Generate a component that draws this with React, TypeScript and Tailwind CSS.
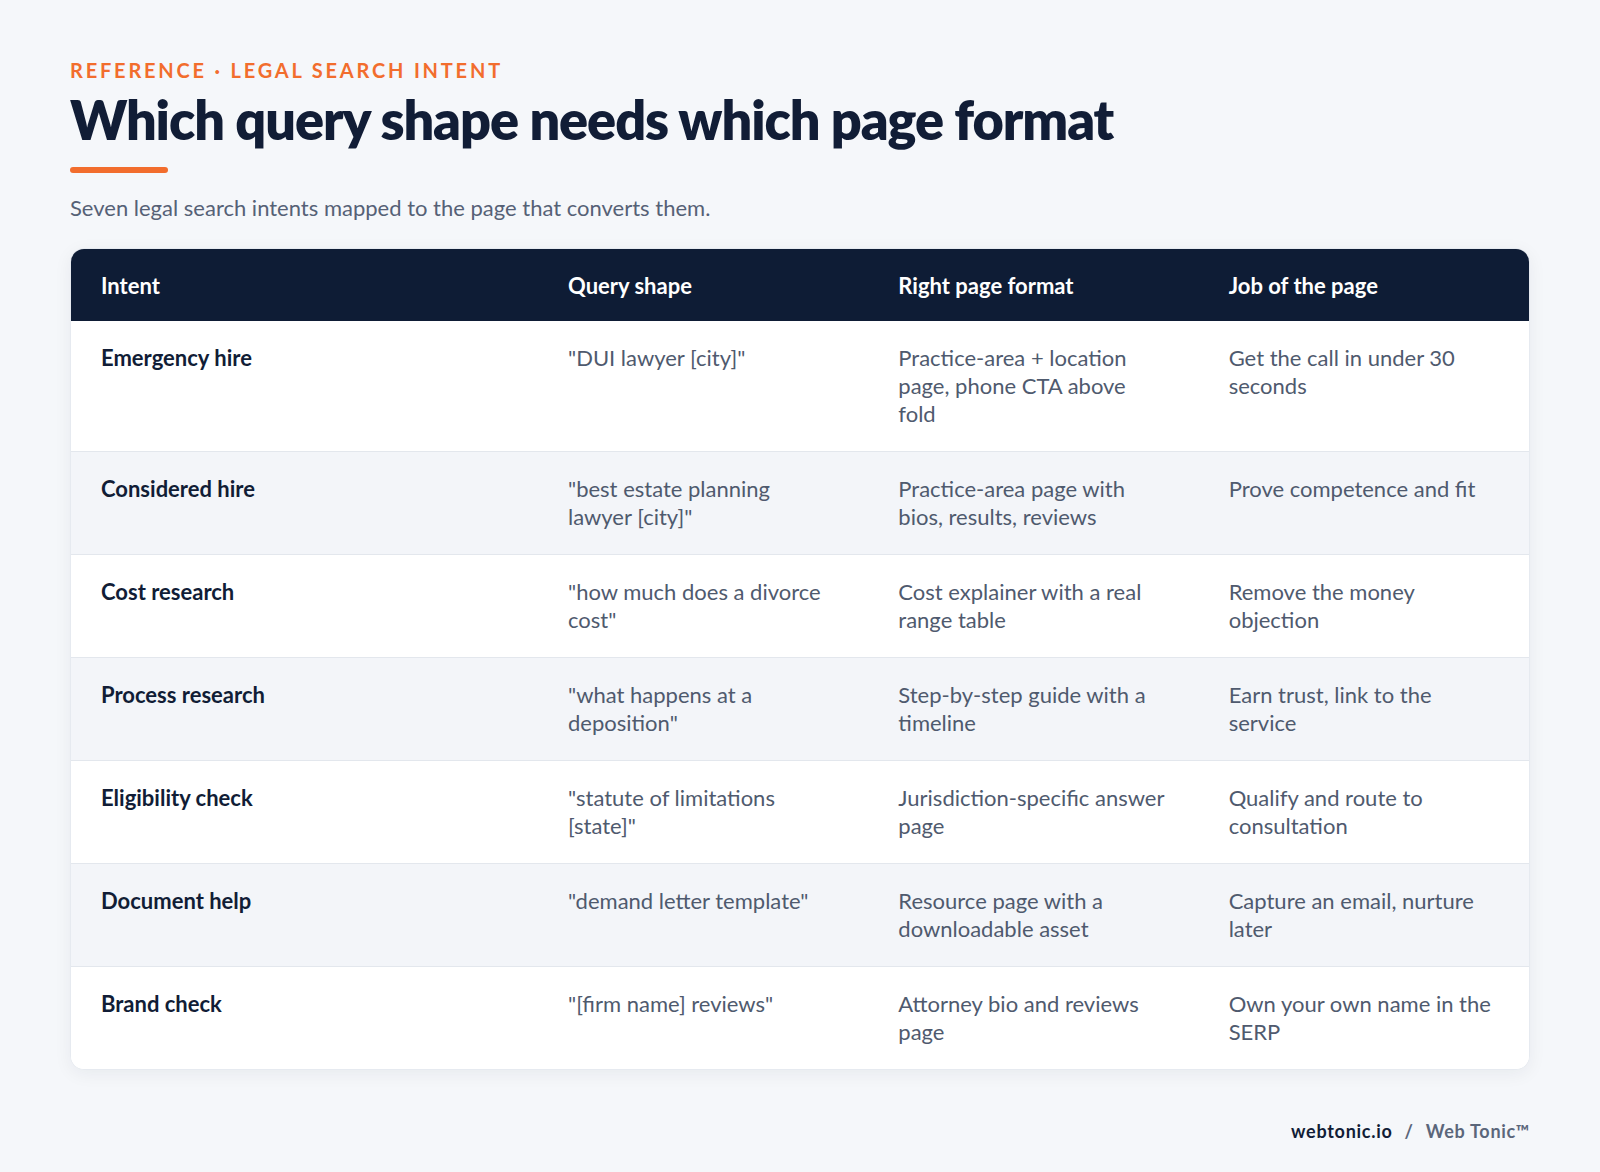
const rows = [
  {
    intent: "Emergency hire",
    query: '"DUI lawyer [city]"',
    format: "Practice-area + location page, phone CTA above fold",
    job: "Get the call in under 30 seconds",
  },
  {
    intent: "Considered hire",
    query: '"best estate planning lawyer [city]"',
    format: "Practice-area page with bios, results, reviews",
    job: "Prove competence and fit",
  },
  {
    intent: "Cost research",
    query: '"how much does a divorce cost"',
    format: "Cost explainer with a real range table",
    job: "Remove the money objection",
  },
  {
    intent: "Process research",
    query: '"what happens at a deposition"',
    format: "Step-by-step guide with a timeline",
    job: "Earn trust, link to the service",
  },
  {
    intent: "Eligibility check",
    query: '"statute of limitations [state]"',
    format: "Jurisdiction-specific answer page",
    job: "Qualify and route to consultation",
  },
  {
    intent: "Document help",
    query: '"demand letter template"',
    format: "Resource page with a downloadable asset",
    job: "Capture an email, nurture later",
  },
  {
    intent: "Brand check",
    query: '"[firm name] reviews"',
    format: "Attorney bio and reviews page",
    job: "Own your own name in the SERP",
  },
];

const headers = ["Intent", "Query shape", "Right page format", "Job of the page"];

export default function App() {
  return (
    <div className="min-h-screen bg-[#f5f7fa] font-['Lato','Noto_Sans',sans-serif]">
      <div className="mx-auto w-[1460px] pt-[58px]">
        <p className="text-[20px] leading-[24px] font-bold tracking-[0.14em] text-[#f26d2d] uppercase">
          Reference · Legal search intent
        </p>
        <h1 className="mt-[6px] text-[54px] leading-[1.2] font-extrabold tracking-[-0.02em] text-[#111d36]">
          Which query shape needs which page format
        </h1>
        <div className="mt-[14px] h-1.5 w-[98px] rounded-full bg-[#f26d2d]" />
        <p className="mt-[22px] text-[22px] leading-[1.2] text-[#566176]">
          Seven legal search intents mapped to the page that converts them.
        </p>

        <div className="mt-[27px] overflow-hidden rounded-[14px] border border-[#e6eaf0] bg-white shadow-[0_4px_18px_rgba(15,27,51,0.06)]">
          <div className="grid h-[72px] grid-cols-[467px_1fr_1fr_1fr] items-center bg-[#0e1c35]">
            {headers.map((h) => (
              <div key={h} className="pl-[30px] text-[22px] font-bold text-white">
                {h}
              </div>
            ))}
          </div>
          {rows.map((r, i) => (
            <div
              key={r.intent}
              className={`grid grid-cols-[467px_1fr_1fr_1fr] text-[22px] leading-[28px] ${
                i % 2 === 1 ? "bg-[#f3f5f9]" : "bg-white"
              } ${i < rows.length - 1 ? "border-b border-[#e3e7ed]" : ""}`}
            >
              <div className="py-[23px] pl-[30px] pr-[30px] font-bold text-[#111d36]">{r.intent}</div>
              <div className="py-[23px] pl-[30px] pr-[32px] text-[#4f5a6e]">{r.query}</div>
              <div className="py-[23px] pl-[30px] pr-[32px] text-[#4f5a6e]">{r.format}</div>
              <div className="py-[23px] pl-[30px] pr-[30px] text-[#4f5a6e]">{r.job}</div>
            </div>
          ))}
        </div>

        <div className="mt-[51px] flex justify-end text-[18px] leading-[1.2] font-bold tracking-[0.04em]">
          <span className="text-[#111d36]">webtonic.io</span>
          <span className="mx-[12px] text-[#5b667a]">/</span>
          <span className="text-[#5b667a]">Web Tonic™</span>
        </div>
      </div>
    </div>
  );
}
